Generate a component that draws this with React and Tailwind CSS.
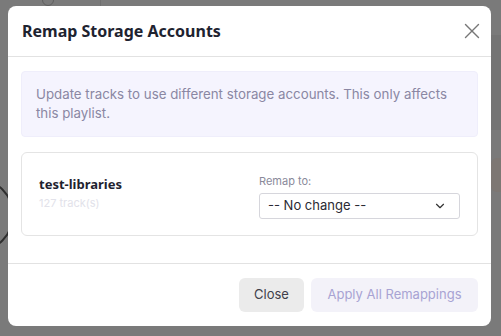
import { X, ChevronDown } from "lucide-react";

export default function App() {
  return (
    <div className="relative w-[501px] h-[336px] overflow-hidden bg-[#7a7a7a] font-['Inter',sans-serif]">
      {/* faint page behind the overlay */}
      <div className="absolute left-[100px] top-0 h-[6px] w-px bg-[#6f6f6f]" />
      <div className="absolute left-[42px] top-[-6px] h-[12px] w-[12px] rounded-full border border-[#5f5f5f]" />
      <div className="absolute right-0 top-[35px] h-[95px] w-[10px] bg-[#747474]" />
      <div className="absolute right-0 top-[158px] h-[34px] w-[10px] rounded-l-md bg-[#7d7773]" />
      <div className="absolute left-[-60px] top-[178px] h-[74px] w-[74px] rounded-full border-2 border-[#2f2f2f]" />

      <div className="absolute left-[8px] top-[6px] w-[483px] h-[320px] rounded-lg bg-white flex flex-col">
        <div className="flex items-center justify-between h-[51px] pl-[14px] pr-[6px] border-b border-[#e2e2e2]">
          <h2 className="text-[16px] font-bold text-[#1e2330] font-['Noto_Sans',sans-serif]">Remap Storage Accounts</h2>
          <X className="w-[26px] h-[26px] text-[#777]" strokeWidth={1.3} />
        </div>

        <div className="flex flex-col gap-[15px] px-[13px] pt-[14px]">
          <div className="rounded bg-[#f5f4fe] border border-[#efeefb] px-[14px] py-[13px] text-[13.3px] leading-[19px] text-[#8a87a3]">
            Update tracks to use different storage accounts. This only affects this playlist.
          </div>

          <div className="flex items-center justify-between rounded-md border border-[#e4e4e4] h-[84px] pl-[17px] pr-[17px]">
            <div className="flex flex-col">
              <span className="text-[13px] font-bold text-[#1e2330] font-['Noto_Sans',sans-serif] leading-[18px]">test-libraries</span>
              <span className="text-[11px] text-[#e2e2ea] leading-[20px]">127 track(s)</span>
            </div>
            <div className="flex flex-col w-[201px] gap-[5px] mt-[4px]">
              <span className="text-[11px] text-[#8a8a9a] leading-[14px]">Remap to:</span>
              <div className="flex items-center justify-between h-[26px] rounded-[3px] border border-[#d6d6dc] pl-[8px] pr-[12px]">
                <span className="text-[13px] text-[#2a2a33]">-- No change --</span>
                <ChevronDown className="w-[14px] h-[14px] text-[#333]" strokeWidth={2} />
              </div>
            </div>
          </div>
        </div>

        <div className="mt-auto border-t border-[#e2e2e2] flex justify-end gap-[7px] px-[13px] pt-[14px] pb-[14px]">
          <button className="h-[34px] w-[65px] rounded-md bg-[#ebebeb] text-[13px] text-[#3f3f4a]">Close</button>
          <button className="h-[34px] w-[167px] rounded-md bg-[#f3f2f9] text-[13px] text-[#a8a3d3]">Apply All Remappings</button>
        </div>
      </div>
    </div>
  );
}
